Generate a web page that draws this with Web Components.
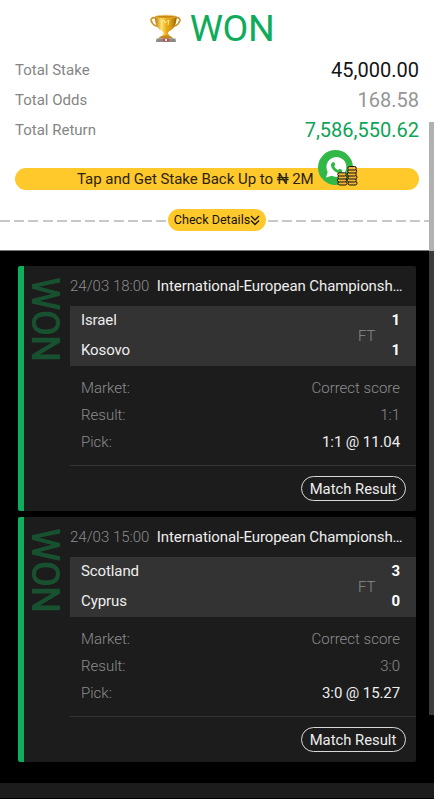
<!DOCTYPE html>
<html lang="en">
<head>
<meta charset="utf-8">
<meta name="viewport" content="width=device-width, initial-scale=1">
<title>Bet details</title>
<style>
	html, body {
		margin: 0;
		height: 100%;
		overflow: hidden;
		background: #fff;
		font-family: Roboto, "Liberation Sans", sans-serif;
	}
</style>
</head>
<body>
<bet-page></bet-page>

<script>
class TrophyIcon extends HTMLElement {
	constructor() {
		super();
		const shadow = this.attachShadow({ mode: "open" });
		shadow.innerHTML = `
      <style>
        :host { display: block; width: 32px; height: 29px; }
        svg { display: block; }
      </style>
      <svg width="32" height="29" viewBox="0 0 32 29">
        <defs>
          <linearGradient id="gold">
            <stop offset="0" stop-color="#b87908"/>
            <stop offset=".3" stop-color="#ffe373"/>
            <stop offset=".55" stop-color="#e9a814"/>
            <stop offset=".75" stop-color="#d99a12"/>
            <stop offset="1" stop-color="#9a6408"/>
          </linearGradient>
        </defs>
        <path d="M7 5C2 2 0 5 2 8.500c1 2.500 4 3.500 7 4M24 5c5-3 7 0 5 3.500-1 2.500-4 3.500-7 4" fill="none" stroke="#cf962a" stroke-width="1.800"/>
        <path d="M5 2.500h21.500c.3 7-2 12-7.500 15-1.500 1-1.500 2.500 1 4.500h-8.500c2.500-2 2.500-3.500 1-4.500-5.500-3-7.800-8-7.500-15z" fill="url(#gold)"/>
        <ellipse cx="15.700" cy="2.700" rx="10.700" ry="1.500" fill="#c88a12" stroke="#f0c650" stroke-width=".6"/>
        <path d="M11 8l3-2 1 3 4-3-1 5" fill="none" stroke="#ffe98c" stroke-width="1"/>
        <path d="M8.500 24.500c1-4 13.500-4 14.500 0z" fill="#c08a1c"/>
        <path d="M6.500 24.500h19l.5 3.500H6z" fill="#8d8a86"/>
        <rect x="13" y="24.500" width="6" height="3" fill="#c74b4b"/>
        <rect x="15" y="25" width="2" height="2" fill="#eee"/>
      </svg>
    `;
	}
}
customElements.define("trophy-icon", TrophyIcon);

class CashbackIcon extends HTMLElement {
	constructor() {
		super();
		const shadow = this.attachShadow({ mode: "open" });
		shadow.innerHTML = `
      <style>
        :host { display: block; width: 40px; height: 36px; }
        svg { display: block; }
      </style>
      <svg width="40" height="36" viewBox="0 0 40 36">
        <circle cx="17.500" cy="17.500" r="17.500" fill="#32b846"/>
        <path d="M8 27.500l1.700-5.600A10 10 0 1 1 13.700 25.800z" fill="#fff"/>
        <path d="M14.500 12.200c.8-.5 1.700-.2 2 .6l.7 1.800c.2.6-1 1.500-.9 2 .8 1.600 2 2.700 3.600 3.400.6.1 1.300-1.400 1.900-1.200l2 .9c.8.400.7 1.200.2 2-1 1.400-3 1.700-5.200.700-3-1.300-5.200-3.700-5.800-6.600-.2-1.500.4-2.800 1.500-3.600z" fill="#32b846"/>
        <g fill="#f0b43c" stroke="#171307" stroke-width="1">
          <rect x="20" y="31.500" width="9" height="3.500" rx="1.700"/>
          <rect x="19.500" y="28.500" width="9" height="3.500" rx="1.700"/>
          <rect x="20" y="25.500" width="9" height="3.500" rx="1.700"/>
          <rect x="19.700" y="22.800" width="8.500" height="3.200" rx="1.600"/>
          <rect x="30" y="31.500" width="9" height="3.500" rx="1.700"/>
          <rect x="29.300" y="28.500" width="9" height="3.500" rx="1.700"/>
          <rect x="30" y="25.500" width="9" height="3.500" rx="1.700"/>
          <rect x="29.300" y="22.500" width="9" height="3.500" rx="1.700"/>
          <rect x="29.700" y="19.500" width="9" height="3.500" rx="1.700"/>
          <rect x="29.800" y="16.500" width="8.500" height="3.500" rx="1.700"/>
        </g>
      </svg>
    `;
	}
}
customElements.define("cashback-icon", CashbackIcon);

class SummaryRow extends HTMLElement {
	constructor() {
		super();
		const shadow = this.attachShadow({ mode: "open" });
		shadow.innerHTML = `
      <style>
        :host {
          display: flex;
          justify-content: space-between;
          align-items: center;
          height: 29.700px;
          color: #858585;
          font-size: 15px;
        }
        .value {
          font-size: 20px;
          color: var(--value-color, #959595);
        }
      </style>
      <span><slot></slot></span>
      <span class="value"><slot name="value"></slot></span>
    `;
	}
}
customElements.define("summary-row", SummaryRow);

class BetSummary extends HTMLElement {
	constructor() {
		super();
		const shadow = this.attachShadow({ mode: "open" });
		shadow.innerHTML = `
      <style>
        :host {
          display: block;
          box-sizing: border-box;
          height: 251px;
          padding-top: 5px;
          background: #fff;
          border-bottom: 1px solid #777;
        }
        .status {
          display: flex;
          justify-content: center;
          align-items: center;
          gap: 8px;
          height: 46px;
          padding-right: 10px;
          color: #0eac5a;
          font-size: 37.500px;
          line-height: 46px;
          letter-spacing: -.5px;
        }
        .rows {
          height: 90px;
          padding: 4.500px 15px 0;
        }
        .offer {
          position: relative;
          box-sizing: border-box;
          height: 22px;
          margin: 22.500px 15px 0;
          padding-left: 62px;
          border-radius: 11px;
          background: #ffc82b;
          color: #2b2410;
          font-size: 15px;
          line-height: 22px;
          letter-spacing: -.03px;
          white-space: nowrap;
        }
        cashback-icon {
          position: absolute;
          left: 303px;
          top: -18px;
        }
        .details {
          display: flex;
          align-items: center;
          gap: 2px;
          height: 22px;
          margin-top: 19px;
        }
        .dash {
          height: 2px;
          margin-top: 1px;
          background: repeating-linear-gradient(90deg, #c8c8c8 0 10px, transparent 10px 14.200px);
        }
        .dash.left { width: 166px; }
        .dash.right { flex: 1; }
        button {
          display: flex;
          align-items: center;
          justify-content: center;
          width: 98px;
          height: 22px;
          padding: 0;
          border: 0;
          border-radius: 11px;
          background: #ffc82b;
          color: #17140a;
          font: 12.600px Roboto, sans-serif;
          white-space: nowrap;
        }
        button span { margin-top: -1px; }
      </style>
      <div class="status"><trophy-icon></trophy-icon><span>WON</span></div>
      <div class="rows">
        <summary-row style="--value-color: #141414">Total Stake<span slot="value">45,000.00</span></summary-row>
        <summary-row>Total Odds<span slot="value">168.58</span></summary-row>
        <summary-row style="--value-color: #0ca457">Total Return<span slot="value">7,586,550.62</span></summary-row>
      </div>
      <div class="offer">Tap and Get Stake Back Up to ₦ 2M<cashback-icon></cashback-icon></div>
      <div class="details">
        <div class="dash left"></div>
        <button><span>Check Details</span>
          <svg width="10" height="11" viewBox="0 0 10 11" fill="none" stroke="#17140a" stroke-width="1.300">
            <path d="M1 1l4 4 4-4M1 5.500l4 4 4-4"/>
          </svg>
        </button>
        <div class="dash right"></div>
      </div>
    `;
	}
}
customElements.define("bet-summary", BetSummary);

class MatchCard extends HTMLElement {
	constructor() {
		super();
		const shadow = this.attachShadow({ mode: "open" });
		shadow.innerHTML = `
      <style>
        :host {
          display: flex;
          box-sizing: border-box;
          height: 245px;
          border-left: 6px solid #10ad5c;
          border-radius: 2px;
          background: #1c1c1c;
          color: #8c8c8c;
          font-size: 15px;
          font-weight: 300;
          overflow: hidden;
        }
        .side {
          width: 46px;
          box-sizing: border-box;
          padding: 11px 7px 0 2px;
          writing-mode: vertical-rl;
          color: #17512f;
          font-size: 38px;
          font-weight: 500;
          line-height: 37px;
          letter-spacing: -.800px;
        }
        .side span { display: block; width: 37px; }
        .body { flex: 1; min-width: 0; }
        .head {
          display: flex;
          gap: 7.500px;
          height: 39.500px;
          line-height: 40px;
          white-space: nowrap;
        }
        .league, .home, .away, .pick {
          color: #eee;
          font-weight: 400;
          letter-spacing: -.1px;
        }
        .teams {
          display: grid;
          grid-template-columns: 1fr 18px 24px;
          grid-template-rows: 30px 30px;
          align-items: center;
          height: 60px;
          padding: 0 16px 0 11px;
          background: #333;
          line-height: 20px;
        }
        .ft {
          grid-column: 2;
          grid-row: 1 / 3;
        }
        .score { grid-column: 3; text-align: right; font-weight: 700; color: #fff; }
        .home, .away, .score { margin-top: -1px; }
        .home { grid-row: 1; }
        .away { grid-row: 2; }
        .info {
          height: 83.500px;
          padding: 8px 16px;
          padding-left: 11px;
          border-bottom: 1px solid #333;
        }
        .row {
          display: flex;
          justify-content: space-between;
          height: 27.400px;
          line-height: 28px;
        }
        .row:last-child { line-height: 29.500px; }
        .foot {
          display: flex;
          justify-content: flex-end;
          padding: 10px 10.500px 0 0;
        }
        button {
          width: 105px;
          height: 25px;
          padding: 1px 0 0;
          border: 1px solid #d8d8d8;
          border-radius: 13px;
          background: none;
          color: #eee;
          font: 14.800px Roboto, sans-serif;
          white-space: nowrap;
        }
      </style>
      <div class="side"><span>WON</span></div>
      <div class="body">
        <div class="head">
          <span class="date"></span>
          <span class="league"><slot></slot></span>
        </div>
        <div class="teams">
          <span class="home"></span>
          <span class="ft">FT</span>
          <span class="score home-score"></span>
          <span class="away"></span>
          <span class="score away-score"></span>
        </div>
        <div class="info">
          <div class="row"><span>Market:</span><span>Correct score</span></div>
          <div class="row"><span>Result:</span><span class="result"></span></div>
          <div class="row"><span>Pick:</span><span class="pick"></span></div>
        </div>
        <div class="foot"><button>Match Result</button></div>
      </div>
    `;
	}

	connectedCallback() {
		const [homeScore, awayScore] = this.getAttribute("result").split(":");
		this.setText(".date", this.getAttribute("date"));
		this.setText(".home", this.getAttribute("home"));
		this.setText(".away", this.getAttribute("away"));
		this.setText(".home-score", homeScore);
		this.setText(".away-score", awayScore);
		this.setText(".result", this.getAttribute("result"));
		this.setText(".pick", this.getAttribute("pick"));
	}

	setText(selector, text) {
		this.shadowRoot.querySelector(selector).textContent = text;
	}
}
customElements.define("match-card", MatchCard);

class BetPage extends HTMLElement {
	constructor() {
		super();
		const shadow = this.attachShadow({ mode: "open" });
		shadow.innerHTML = `
      <style>
        :host {
          display: block;
          position: relative;
          height: 800px;
        }
        .list {
          display: flex;
          flex-direction: column;
          gap: 6px;
          box-sizing: border-box;
          height: 532px;
          padding: 15px 18px 0;
          background: #000;
        }
        .bottom {
          height: 15px;
          background: #1c1c1c;
          border-bottom: 1px solid #000;
        }
        .scrollbar {
          position: absolute;
          top: 122px;
          right: 0;
          width: 5px;
          height: 593px;
          background: #b1b1b1;
        }
        .scrollbar::after {
          content: "";
          position: absolute;
          inset: 129px 0 0;
          background: #3b3b3b;
        }
      </style>
      <bet-summary></bet-summary>
      <div class="list">
        <match-card date="24/03 18:00" home="Israel" away="Kosovo" result="1:1" pick="1:1 @ 11.04">International-European Championsh…</match-card>
        <match-card date="24/03 15:00" home="Scotland" away="Cyprus" result="3:0" pick="3:0 @ 15.27">International-European Championsh…</match-card>
      </div>
      <div class="bottom"></div>
      <div class="scrollbar"></div>
    `;
	}
}
customElements.define("bet-page", BetPage);
</script>
</body>
</html>
